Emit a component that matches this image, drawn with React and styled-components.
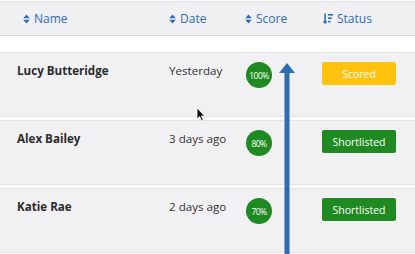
import React from "react";
import styled, { createGlobalStyle } from "styled-components";

const GlobalStyle = createGlobalStyle`
  html, body {
    margin: 0;
    padding: 0;
    background: #ffffff;
  }
  body {
    font-family: "Open Sans", "Liberation Sans", sans-serif;
  }
`;

const candidates = [
  { name: "Lucy Butteridge", date: "Yesterday", score: "100%", status: "Scored" },
  { name: "Alex Bailey", date: "3 days ago", score: "80%", status: "Shortlisted" },
  { name: "Katie Rae", date: "2 days ago", score: "70%", status: "Shortlisted" },
];

// little up/down caret used on sortable headers
function SortIcon() {
  return (
    <svg width="7" height="10" viewBox="0 0 7 10">
      <path d="M3.5 0.5 L6.8 4.2 H0.2 Z" fill="currentColor" />
      <path d="M3.5 9.5 L6.8 5.8 H0.2 Z" fill="currentColor" />
    </svg>
  );
}

// active sort: arrow down with bars getting shorter
function SortDescIcon() {
  return (
    <svg width="10" height="12" viewBox="0 0 10 12">
      <rect x="1.3" y="0.5" width="1.6" height="8" fill="currentColor" />
      <path d="M0 8 H4.2 L2.1 11.5 Z" fill="currentColor" />
      <rect x="5" y="1" width="5" height="1.6" fill="currentColor" />
      <rect x="5" y="4.4" width="3.8" height="1.6" fill="currentColor" />
      <rect x="5" y="7.8" width="2.6" height="1.6" fill="currentColor" />
    </svg>
  );
}

export default function App() {
  return (
    <>
      <GlobalStyle />
      <Board>
        <Header>
          <HeadCell>
            <SortIcon /> Name
          </HeadCell>
          <HeadCell>
            <SortIcon /> Date
          </HeadCell>
          <HeadCell>
            <SortIcon /> Score
          </HeadCell>
          <HeadCell>
            <SortDescIcon /> Status
          </HeadCell>
        </Header>

        <Spacer />

        {candidates.map((c) => (
          <Row key={c.name}>
            <Name>{c.name}</Name>
            <DateText>{c.date}</DateText>
            <ScoreCell>
              <ScoreBubble>{c.score}</ScoreBubble>
            </ScoreCell>
            <Badge $status={c.status}>{c.status}</Badge>
          </Row>
        ))}

        {/* annotation arrow drawn over the table */}
        <Arrow width="18" height="200" viewBox="0 0 18 200">
          <path d="M9 0 L17 10 H11.5 V200 H6.5 V10 H1 Z" fill="#2b6cb2" />
        </Arrow>

        {/* mouse pointer */}
        <Cursor width="10" height="15" viewBox="0 0 10 15">
          <path
            d="M1 1 L1 12 L3.6 9.6 L5.6 14 L7.3 13.2 L5.4 9 L8.8 9 Z"
            fill="#111"
            stroke="#fff"
            strokeWidth="0.8"
          />
        </Cursor>
      </Board>
    </>
  );
}

const Board = styled.div`
  position: relative;
  width: 415px;
  height: 254px;
  overflow: hidden;
  background: #ffffff;
`;

const Header = styled.div`
  margin-top: 1px;
  height: 35px;
  box-sizing: border-box;
  border-top: 1px solid #e1e1e4;
  border-bottom: 1px solid #d9d9dc;
  background: #f0f0f2;
  display: grid;
  grid-template-columns: 146px 76px 78px 1fr;
  align-items: center;
  padding-left: 23px;
`;

const HeadCell = styled.div`
  display: flex;
  align-items: center;
  gap: 4px;
  font-size: 12px;
  color: #2d6db5;
  svg {
    flex: none;
  }
`;

const Spacer = styled.div`
  height: 16px;
`;

const Row = styled.div`
  display: grid;
  grid-template-columns: 152px 77px 76px 74px;
  align-items: start;
  height: 54px;
  padding: 9px 0 0 17px;
  border-top: 1px solid #e3e3e6;
  border-bottom: 1px solid #e3e3e6;
  background: #f1f1f3;
  margin-bottom: 3px;
`;

const Name = styled.div`
  font-size: 11.6px;
  font-weight: 700;
  line-height: 18px;
  color: #2b2b2b;
`;

const DateText = styled.div`
  font-size: 11.6px;
  line-height: 18px;
  color: #333333;
`;

const ScoreCell = styled.div`
  display: flex;
`;

const ScoreBubble = styled.div`
  width: 26px;
  height: 26px;
  border-radius: 50%;
  background: #1f8a22;
  color: #ffffff;
  font-size: 8.5px;
  letter-spacing: -0.5px;
  display: flex;
  align-items: center;
  justify-content: center;
`;

const Badge = styled.div`
  height: 23px;
  border-radius: 2px;
  background: ${(p) => (p.$status === "Scored" ? "#ffc20e" : "#1f8a22")};
  color: #ffffff;
  font-size: 10.5px;
  display: flex;
  align-items: center;
  justify-content: center;
`;

const Arrow = styled.svg`
  position: absolute;
  left: 278px;
  top: 63px;
`;

const Cursor = styled.svg`
  position: absolute;
  left: 196px;
  top: 107px;
`;
